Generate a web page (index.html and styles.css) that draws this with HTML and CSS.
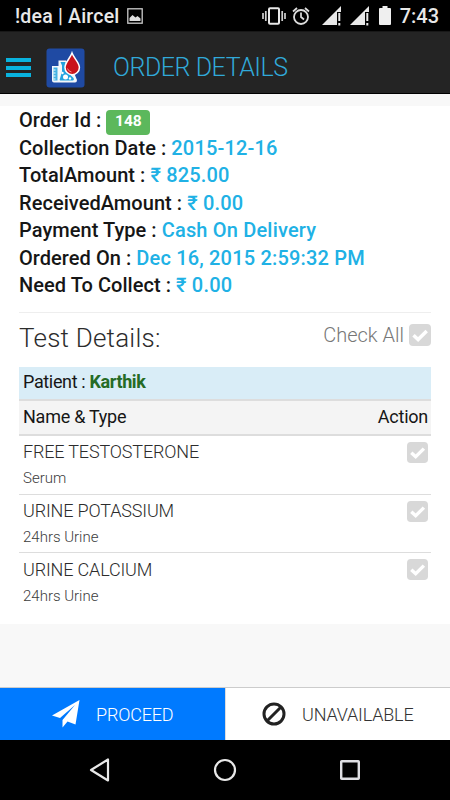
FILE: index.html
```html
<!DOCTYPE html>
<html lang="en">
<head>
<meta charset="utf-8">
<title>Order Details</title>
<link rel="stylesheet" href="styles.css">
</head>
<body>
<svg width="0" height="0" class="defs">
  <symbol id="check" viewBox="0 0 22 22"><rect width="22" height="22" rx="4" fill="#d8d8d8"/><path d="M4.500 11.200l4.600 4.300 8.600-8.500" fill="none" stroke="#fff" stroke-width="3.500"/></symbol>
  <symbol id="signal" viewBox="0 0 20 20"><path d="M0 19L19 0v6h-4v13z" fill="#e8e8e8"/><path d="M17.3 7v8M17.3 17v2.4" stroke="#e8e8e8" stroke-width="2"/></symbol>
</svg>
<div class="status">
  <span class="carrier">!dea | Aircel</span>
  <svg class="pic" width="16" height="16" viewBox="0 0 16 16"><rect x=".8" y=".8" width="14.4" height="14.4" fill="none" stroke="#ccc" stroke-width="1.3"/><path d="M2.5 13V10l3-3 3 2.5L10.500 8l3 2.500V13z" fill="#ddd"/></svg>
  <svg class="vibrate" width="24" height="18" viewBox="0 0 24 18"><rect x="7" y="1.200" width="10" height="15.600" rx="1" fill="none" stroke="#e8e8e8" stroke-width="2"/><path d="M1 6v6M3.800 4v10M20.200 4v10M23 6v6" stroke="#d0d0d0" stroke-width="1.700"/></svg>
  <svg class="alarm" width="18" height="18" viewBox="0 0 18 18"><circle cx="9" cy="10" r="7" fill="none" stroke="#ddd" stroke-width="1.800"/><path d="M1 4.500L5 1M17 4.500L13 1M9 5.500V10l3 2.500" fill="none" stroke="#ddd" stroke-width="1.700"/></svg>
  <svg class="sig1" width="20" height="20"><use href="#signal"/></svg>
  <svg class="sig2" width="20" height="20"><use href="#signal"/></svg>
  <svg class="battery" width="12" height="19" viewBox="0 0 12 19"><path d="M0 3q0-1 1-1h2.500V0h5v2H11q1 0 1 1v15q0 1-1 1H1q-1 0-1-1z" fill="#efefef"/></svg>
  <span class="clock">7:43</span>
</div>
<header class="header">
  <div class="menu"><i></i><i></i><i></i></div>
  <svg class="logo" width="39" height="40" viewBox="0 0 39 40"><rect x=".5" y=".5" width="38" height="39" rx="3" fill="#1f4aa3"/>
    <path d="M6 18h6.500v-5.500H20l7 10 4 9.500q0 2.500-2 2.500H8q-2 0-2-2z" fill="#f4f8fb"/>
    <path d="M7.500 19.500h4v13h-4z" fill="#45b2e2"/><path d="M7.500 22h2M7.500 25h2M7.500 28h2M7.500 31h2" stroke="#fff" stroke-width="1"/>
    <path d="M14.500 14h5v8l8 8q1 2.500-1 2.500H15q-2 0-1-2l2-7v-6z" fill="#24a3df"/><circle cx="19.500" cy="29" r="2.500" fill="#fff"/><circle cx="16.500" cy="25" r="1.200" fill="#fff"/><circle cx="24" cy="30.500" r="1.200" fill="#fff"/>
    <path d="M26 5C24 10.500 19 14.500 19 19.500a7.200 7.200 0 0 0 14.400 0C33.400 14.500 28 10.500 26 5z" fill="#c9131c" stroke="#fff" stroke-width="1.500"/><path d="M21.500 20.500q1 3 4 3.500" fill="none" stroke="#ef8b8e" stroke-width="1"/></svg>
  <h1>ORDER DETAILS</h1>
</header>
<main class="card">
  <div class="info">
    <p><span>Order Id :</span> <b class="badge">148</b></p>
    <p><span>Collection Date : <em>2015-12-16</em></span></p>
    <p><span>TotalAmount : <em>₹ 825.00</em></span></p>
    <p><span>ReceivedAmount : <em>₹ 0.00</em></span></p>
    <p><span>Payment Type : <em>Cash On Delivery</em></span></p>
    <p><span>Ordered On : <em>Dec 16, 2015 2:59:32 PM</em></span></p>
    <p><span>Need To Collect : <em>₹ 0.00</em></span></p>
  </div>
  <div class="tests-head"><h2>Test Details:</h2><div class="all"><span>Check All</span><svg width="22" height="22"><use href="#check"/></svg></div></div>
  <div class="patient"><span>Patient : <b>Karthik</b></span></div>
  <div class="columns"><span>Name &amp; Type</span><span>Action</span></div>
  <div class="test"><div><h3>FREE TESTOSTERONE</h3><small>Serum</small></div><svg width="21" height="21"><use href="#check"/></svg></div>
  <div class="test"><div><h3>URINE POTASSIUM</h3><small>24hrs Urine</small></div><svg width="21" height="21"><use href="#check"/></svg></div>
  <div class="test"><div><h3>URINE CALCIUM</h3><small>24hrs Urine</small></div><svg width="21" height="21"><use href="#check"/></svg></div>
</main>
<footer class="actions">
  <div class="proceed"><svg width="28" height="28" viewBox="0 0 28 28"><path d="M27.500 0L23.500 24.500 15.500 21.500 10.500 27.500V20L23 5 8 18 0 15.500z" fill="#fff"/></svg><span>PROCEED</span></div>
  <div class="unavailable"><svg width="24" height="24" viewBox="0 0 24 24"><circle cx="12" cy="12" r="10" fill="none" stroke="#222" stroke-width="3"/><path d="M5 19L19 5" stroke="#222" stroke-width="3"/></svg><span>UNAVAILABLE</span></div>
</footer>
<nav class="nav">
  <svg width="22" height="26" viewBox="0 0 22 26"><path d="M19 2.500v21L2 13z" fill="none" stroke="#e8e8e8" stroke-width="2.200" stroke-linejoin="round"/></svg>
  <svg width="24" height="24" viewBox="0 0 24 24"><circle cx="12" cy="12" r="10" fill="none" stroke="#e8e8e8" stroke-width="2.200"/></svg>
  <svg width="20" height="20" viewBox="0 0 20 20"><rect x="1.200" y="1.200" width="17.600" height="17.600" rx=".5" fill="none" stroke="#dedee2" stroke-width="2.400"/></svg>
</nav>
</body>
</html>
```
FILE: styles.css
```css
* { box-sizing: border-box; }
body { margin: 0; width: 450px; height: 800px; display: flex; flex-direction: column; overflow: hidden; background: #f8f8f8; font-family: Roboto, "Liberation Sans", sans-serif; color: #161616; }
h1, h2, h3, p { margin: 0; font-weight: 300; }
svg { flex: none; display: block; }
span { white-space: nowrap; }
.defs { position: absolute; }
.status { height: 31px; flex: none; background: #000; color: #e8e8e8; display: flex; align-items: flex-start; padding: 0 11px 0 15px; font-weight: 500; }
.carrier { font-size: 19.5px; line-height: 33px; width: 112px; letter-spacing: .2px; }
.pic { margin-top: 8px; }
.vibrate { margin: 7px 0 0 119px; }
.alarm { margin: 7px 0 0 6px; }
.sig1 { margin: 6px 0 0 12px; }
.sig2 { margin: 6px 0 0 8px; }
.battery { margin: 6px 0 0 9px; }
.clock { font-size: 20px; line-height: 33px; margin-left: auto; }
.header { height: 63px; flex: none; background: #242424; border-top: 1px solid #181818; border-bottom: 1px solid #000; display: flex; align-items: flex-start; }
.menu { width: 25px; margin: 26px 0 0 6px; display: grid; gap: 3.500px; }
.menu i { height: 4px; background: #09b3df; }
.logo { margin: 16px 0 0 15px; }
.header h1 { font-size: 25px; line-height: 32px; margin: 20px 0 0 28px; color: #31a9d9; letter-spacing: -.45px; }
.card { height: 518px; margin-top: 12px; padding: 0 19px; background: #fff; flex: none; }
.info { height: 207px; border-bottom: 1px solid #eee; font-size: 20px; font-weight: 500; }
.info p { height: 27.500px; line-height: 28.500px; font-weight: 500; display: flex; align-items: flex-start; letter-spacing: .05px; }
.info em { font-style: normal; color: #20b1e5; letter-spacing: .18px; }
.badge { width: 44px; height: 25px; margin: 4px 0 0 5px; border-radius: 4px; background: #5cb85c; color: #fff; font-size: 15.500px; line-height: 23px; text-align: center; }
.tests-head { height: 54px; display: flex; justify-content: space-between; }
.tests-head h2 { font-size: 26px; line-height: 51px; letter-spacing: .22px; color: #2c2c2c; }
.all { display: flex; gap: 5px; font-size: 20px; line-height: 44px; font-weight: 300; color: #777; }
.all svg { margin-top: 11px; }
.patient { height: 34px; background: #d9edf7; border-bottom: 2px solid #ddd; padding-left: 4px; font-size: 18px; line-height: 30px; letter-spacing: -.36px; }
.patient b { color: #256b25; }
.columns { height: 35px; background: #f4f4f4; border-bottom: 2px solid #ddd; display: flex; justify-content: space-between; padding: 0 3px 0 4px; font-size: 18px; line-height: 31px; letter-spacing: -.25px; }
.test { height: 58.500px; border-bottom: 1.500px solid #ddd; display: flex; justify-content: space-between; padding: 0 3px 0 4px; }
.test:last-child { border: 0; }
.test:last-child > div { padding-top: 1px; }
.test h3 { font-size: 18px; line-height: 31px; height: 31px; letter-spacing: -.16px; color: #2c2c2c; }
.test small { display: block; font-size: 15px; line-height: 22px; font-weight: 300; color: #3c3c3c; }
.test svg { margin-top: 6px; }
.actions { height: 53px; margin-top: 63px; flex: none; display: flex; border-top: 1px solid #ccc; }
.actions div { width: 225px; display: flex; align-items: flex-start; font-size: 18px; line-height: 54px; font-weight: 300; letter-spacing: -.18px; }
.proceed { background: #007aff; color: #fff; padding-left: 52px; }
.proceed svg { margin: 12px 16px 0 0; }
.unavailable { background: #fff; border-left: 1px solid #ddd; padding-left: 35.500px; color: #333; }
.unavailable svg { margin: 14px 16.500px 0 0; }
.nav { height: 60px; background: #000; display: flex; flex: none; align-items: center; padding-left: 89px; }
.nav svg:nth-child(2) { margin: 0 103px 0 102px; }
```
